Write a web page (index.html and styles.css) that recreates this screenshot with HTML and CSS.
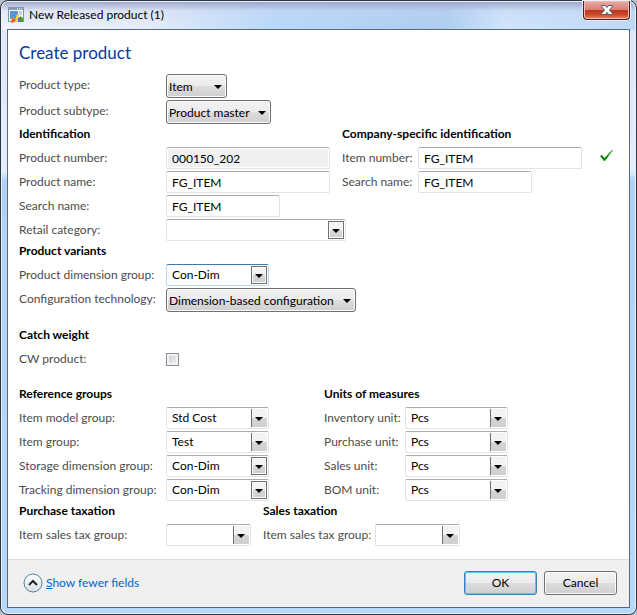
FILE: index.html
```html
<!DOCTYPE html>
<html lang="en">
<head>
<meta charset="utf-8">
<title>New Released product (1)</title>
<link rel="stylesheet" href="styles.css">
</head>
<body>
<div class="window">
  <header class="titlebar">
    <svg class="app-icon" width="16" height="16" viewBox="0 0 16 16" aria-hidden="true">
      <rect x=".5" y=".5" width="15" height="14" fill="#f4f7fb" stroke="#8493a8"/>
      <path d="M1 2h14" stroke="#8a9bb5" stroke-width="2"/>
      <path d="M9 2h1m1 0h1m1 0h1" stroke="#fff"/>
      <rect x="2" y="4" width="8" height="8" fill="#5596d8"/>
      <path d="M11 5h3M11 7h3" stroke="#9aa8bc"/>
      <path d="M3 15l1-5 3 2 2-5 2 1-2 7z" fill="#f7a823"/>
      <path d="M3 15l2-4 2 2-2 3z" fill="#e8502a"/>
      <path d="M8 15V9l2-2v8z" fill="#ffd23c"/>
      <path d="M10 15v-4l2-1v5z" fill="#3b76c4"/>
      <path d="M12 15v-6l3 2v4z" fill="#4c9a35"/>
    </svg>
    <span class="title">New Released product (1)</span>
    <button class="close" type="button" aria-label="Close">
      <svg width="12" height="10" viewBox="0 0 12 10" aria-hidden="true">
        <path d="M.5.5h4L6 2.500 7.500.5h4v1L8.500 5l3 3.500v1h-4L6 7.500 4.500 9.500h-4v-1L3.500 5l-3-3.500z" fill="#fff" stroke="#535666"/>
      </svg>
    </button>
  </header>
  <form class="panel">
    <main class="content">
      <h1>Create product</h1>
      <div class="row tall"><label for="type">Product type:</label><span class="drop w-type"><select id="type"><option>Item</option></select></span></div>
      <div class="row tall"><label for="subtype">Product subtype:</label><span class="drop w-subtype"><select id="subtype"><option>Product master</option></select></span></div>

      <div class="columns">
        <section class="col identification">
          <h2>Identification</h2>
          <div class="row"><label for="number">Product number:</label><input class="w-long" id="number" value="000150_202" readonly></div>
          <div class="row"><label for="name">Product name:</label><input class="w-long" id="name" value="FG_ITEM"></div>
          <div class="row"><label for="search">Search name:</label><input class="w-short" id="search" value="FG_ITEM"></div>
          <div class="row"><label for="retail">Retail category:</label><span class="combo framed w-retail"><select id="retail"><option></option></select></span></div>
        </section>
        <section class="col company">
          <h2>Company-specific identification</h2>
          <div class="row"><label for="item">Item number:</label><input class="w-long" id="item" value="FG_ITEM">
            <svg class="check" width="14" height="12" viewBox="0 0 14 12" aria-hidden="true"><path d="M0 6l2-1 2.500 3L12 0h1L5 11H4z" fill="#159a0c"/><path d="M1 6l3.500 4L8 6" fill="none" stroke="#08720a"/></svg>
          </div>
          <div class="row"><label for="item-search">Search name:</label><input class="w-short" id="item-search" value="FG_ITEM"></div>
        </section>
      </div>

      <section>
        <h2>Product variants</h2>
        <div class="row"><label for="dimension">Product dimension group:</label><span class="combo framed active w-combo"><select id="dimension"><option>Con-Dim</option></select></span></div>
        <div class="row tall"><label for="config">Configuration technology:</label><span class="drop w-config"><select id="config"><option>Dimension-based configuration</option></select></span></div>
      </section>

      <section class="spaced">
        <h2>Catch weight</h2>
        <div class="row check-row"><label for="cw">CW product:</label><input id="cw" type="checkbox"></div>
      </section>

      <div class="columns spaced">
        <section class="col reference">
          <h2>Reference groups</h2>
          <div class="row"><label for="model">Item model group:</label><span class="combo w-combo"><select id="model"><option>Std Cost</option></select></span></div>
          <div class="row"><label for="group">Item group:</label><span class="combo w-combo"><select id="group"><option>Test</option></select></span></div>
          <div class="row"><label for="storage">Storage dimension group:</label><span class="combo framed w-combo"><select id="storage"><option>Con-Dim</option></select></span></div>
          <div class="row"><label for="tracking">Tracking dimension group:</label><span class="combo framed w-combo"><select id="tracking"><option>Con-Dim</option></select></span></div>
        </section>
        <section class="col units">
          <h2>Units of measures</h2>
          <div class="row"><label for="inventory">Inventory unit:</label><span class="combo w-combo"><select id="inventory"><option>Pcs</option></select></span></div>
          <div class="row"><label for="purchase">Purchase unit:</label><span class="combo w-combo"><select id="purchase"><option>Pcs</option></select></span></div>
          <div class="row"><label for="sales">Sales unit:</label><span class="combo w-combo"><select id="sales"><option>Pcs</option></select></span></div>
          <div class="row"><label for="bom">BOM unit:</label><span class="combo w-combo"><select id="bom"><option>Pcs</option></select></span></div>
        </section>
      </div>

      <div class="columns">
        <section class="col purchase-tax">
          <h2>Purchase taxation</h2>
          <div class="row"><label for="ptax">Item sales tax group:</label><span class="combo w-tax"><select id="ptax"><option></option></select></span></div>
        </section>
        <section class="col sales-tax">
          <h2>Sales taxation</h2>
          <div class="row"><label for="stax">Item sales tax group:</label><span class="combo w-tax"><select id="stax"><option></option></select></span></div>
        </section>
      </div>
    </main>
    <footer class="footer">
      <a class="fewer" href="#">
        <svg width="20" height="20" viewBox="0 0 20 20" aria-hidden="true">
          <defs><linearGradient id="disc" x2="0" y2="1"><stop offset="0" stop-color="#fff"/><stop offset="1" stop-color="#d9dee3"/></linearGradient></defs>
          <circle cx="10" cy="10" r="9" fill="url(#disc)" stroke="#4f7f9f"/>
          <path d="M6 12l4-4 4 4" fill="none" stroke="#222" stroke-width="2"/>
        </svg>
        <span class="fewer-text">Show fewer fields</span>
      </a>
      <button class="btn primary" type="button">OK</button>
      <button class="btn" type="button">Cancel</button>
    </footer>
  </form>
</div>
</body>
</html>
```
FILE: styles.css
```css
* { box-sizing: border-box; }

body {
  margin: 0;
  background: #b9c3cf;
  color: #000;
  font: 12px/18px Lato, "Open Sans", sans-serif;
}

input, select, button { font: inherit; color: inherit; margin: 0; }

.window {
  display: flex;
  flex-direction: column;
  min-height: 100vh;
  padding: 0 6px 6px;
  border: 1px solid #2d3540;
  border-radius: 8px;
  background:
    linear-gradient(#9aa3c8 0, #c9d3ee66 10px, transparent 28px),
    linear-gradient(100deg, #f1f5fb 0, #e6eef9 150px, #b9d9fa 270px, #a9cdf0 440px, #d0e6fd 500px, #bcd9f5 100%) 0 0 / 100% 29px no-repeat,
    linear-gradient(#dbe7f6 0, #e4eefa 170px, #b0d2f7 180px, #b7d9fb 100%);
  box-shadow: inset 0 0 0 1px #e3f1fd;
}

.titlebar { display: flex; align-items: flex-start; height: 28px; }
.app-icon { margin: 6px 0 0 1px; }
.title { flex: 1; margin: 5px 0 0 5px; }

.close {
  display: flex;
  align-items: center;
  justify-content: center;
  width: 47px;
  height: 19px;
  padding: 0;
  border: 1px solid #4b1d20;
  border-top: 0;
  border-radius: 0 0 4px 4px;
  background: linear-gradient(#e9aba3 0, #d98076 48%, #bf3419 50%, #c9482a 75%, #e58b62 100%);
  box-shadow: inset 0 0 0 1px #f3bcb3, 0 0 0 1px #e8eef8;
}

.panel {
  display: flex;
  flex: 1;
  flex-direction: column;
  margin: 0;
  border: 1px solid #5a6b78;
  background: #fff;
}

.content { flex: 1; padding: 10px 11px 0; }

h1 {
  margin: 0;
  height: 34px;
  color: #0b3aa0;
  font-size: 17px;
  font-weight: 400;
  line-height: 26px;
}

h2 { margin: 0; height: 21px; font-size: 12px; line-height: 16px; white-space: nowrap; }

.columns { display: flex; }
.spaced { margin-top: 13px; }
.identification { width: 323px; }
.reference { width: 305px; }
.purchase-tax { width: 244px; }

.row { display: flex; align-items: flex-start; height: 24px; }
.row > * { flex: none; }
.row.tall { height: 26px; }
.row.check-row { height: 25px; }
.row label { width: 147px; color: #4c4c4c; line-height: 22px; white-space: nowrap; }
.company label { width: 76px; }
.units label { width: 81px; }
.sales-tax label { width: 112px; }

.w-type { width: 61px; }
.w-subtype { width: 105px; }
.w-config { width: 190px; }
.w-long { width: 164px; }
.w-short { width: 114px; }
.w-retail { width: 180px; }
.w-combo { width: 103px; }
.w-tax { width: 85px; }

.row input:not([type]), .combo {
  height: 22px;
  border: 1px solid #dfe2ea;
  border-top-color: #abadb3;
  border-radius: 2px;
  background: #fff;
}
.row input:not([type]) { padding: 0 5px; }
.row input[readonly] { background: #f0f0f0; box-shadow: inset 0 0 0 1px #fff; }

.combo, .drop { position: relative; display: block; }
.combo select, .drop select {
  display: block;
  width: 100%;
  height: 100%;
  padding: 0 16px 0 5px;
  border: 0;
  background: none;
  appearance: none;
}
.combo.active { border-color: #b7d9ed; border-top-color: #3d7bad; }

/* Arrow button at the right end of a combo */
.combo::before {
  content: "";
  box-sizing: border-box;
  position: absolute;
  top: 1px;
  right: 1px;
  width: 16px;
  height: 18px;
  border-left: 1px solid #707070;
  background: linear-gradient(#f3f3f3 50%, #d6d6d6 50%, #cfcfcf);
  pointer-events: none;
}
.combo.framed::before { border: 1px solid #707070; box-shadow: inset 0 0 0 1px #fafafa; }

.combo::after, .drop::after {
  content: "";
  position: absolute;
  top: 9px;
  right: 5px;
  border: 4px solid transparent;
  border-top-color: #000;
  border-bottom: 0;
  pointer-events: none;
}

.drop {
  height: 24px;
  border: 1px solid #707070;
  border-radius: 3px;
  background: linear-gradient(#f2f2f2, #ebebeb 50%, #ddd 50%, #cfcfcf);
  box-shadow: inset 0 0 0 1px #fafafa;
}
.drop select { padding: 1px 0 0 2px; }
.drop::after { top: 10px; right: 4px; }

.row input[type="checkbox"] {
  width: 13px;
  height: 13px;
  margin-top: 5px;
  border: 1px solid #8e8f8f;
  background: linear-gradient(135deg, #c4c9d1, #f5f5f5);
  box-shadow: inset 0 0 0 2px #f4f4f4;
  appearance: none;
}

.check { margin: 3px 0 0 18px; }

.footer {
  display: flex;
  align-items: flex-start;
  gap: 7px;
  height: 48px;
  padding: 11px 12px 0 15px;
  border-top: 1px solid #d6dfe8;
  background: #f0f0f0;
}

.fewer {
  display: flex;
  align-items: center;
  gap: 3px;
  margin-right: auto;
  height: 24px;
  color: #0066cc;
  text-decoration: none;
}
.fewer-text::first-letter { text-decoration: underline; }

.btn {
  width: 73px;
  height: 24px;
  padding: 0;
  border: 1px solid #707070;
  border-radius: 3px;
  background: linear-gradient(#f2f2f2, #ebebeb 50%, #ddd 50%, #cfcfcf);
  box-shadow: inset 0 0 0 1px #fafafa;
}
.btn.primary { border-color: #3c7fb1; box-shadow: inset 0 0 0 1px #46d0fa; }
```
